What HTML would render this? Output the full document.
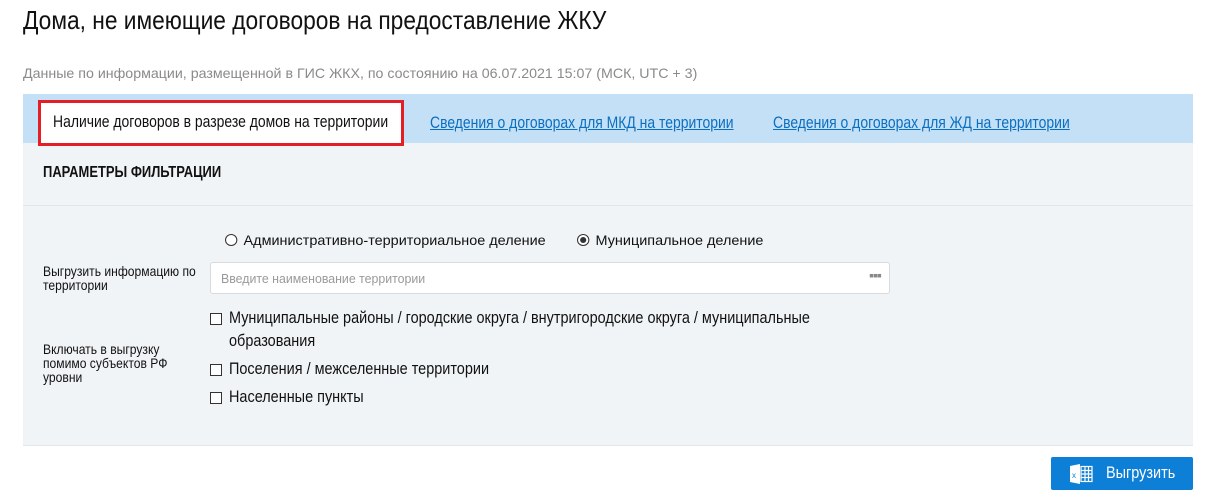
<!DOCTYPE html>
<html><head><meta charset="utf-8"><style>
*{box-sizing:border-box;margin:0;padding:0}
body{width:1209px;height:498px;background:#fff;font-family:"Liberation Sans",sans-serif;color:#111;position:relative;overflow:hidden}
.a{position:absolute;white-space:nowrap;transform-origin:0 50%}
h1{position:absolute;left:23px;top:5px;font-size:26px;font-weight:normal;color:#111;white-space:nowrap;transform:scaleX(0.875);transform-origin:0 50%}
.sub{left:23px;top:65px;font-size:14px;color:#8a8a8a;transform:scaleX(1.015)}
.panel{position:absolute;left:23px;top:94px;width:1170px;height:352px;background:#f1f4f7;border-bottom:1px solid #e2e6ea}
.tabbar{position:absolute;left:0;top:0;width:1170px;height:49px;background:#c4e0f6}
.tab{position:absolute;left:15px;top:6px;width:366px;height:46px;background:#fff;border:3px solid #e31e24}
.lnk{font-size:17px;color:#0b6fc0;text-decoration:underline;top:19px;transform:scaleX(0.82)}
.sep{position:absolute;left:0;top:111px;width:1170px;height:1px;background:#e2e6ea}
.lbl{font-size:14px;line-height:14px;color:#111;transform:scaleX(0.865)}
.rad{display:inline-block;width:12px;height:12px;border:1px solid #333;border-radius:50%;vertical-align:-1px;margin-right:6px;position:relative;background:#fff}
.rad.on::after{content:"";position:absolute;left:2px;top:2px;width:6px;height:6px;border-radius:50%;background:#333}
.cb{position:absolute;left:0;top:4px;width:12px;height:12px;border:1px solid #333;background:#fff}
.chk{font-size:17px;color:#111}
.ct{position:absolute;left:19px;top:-1px;white-space:nowrap;transform:scaleX(0.85);transform-origin:0 50%}
.inp{position:absolute;left:187px;top:168px;width:680px;height:32px;background:#fff;border:1px solid #d7dbe0;border-radius:3px;font-size:13px;color:#9a9a9a}
.btn{position:absolute;left:1051px;top:457px;width:142px;height:33px;background:#0d7fd6;border-radius:2px;color:#fff;font-size:17px}
</style></head><body>
<h1>Дома, не имеющие договоров на предоставление ЖКУ</h1>
<div class="a sub">Данные по информации, размещенной в ГИС ЖКХ, по состоянию на 06.07.2021 15:07 (МСК, UTC + 3)</div>
<div class="panel">
 <div class="tabbar">
  <div class="tab"><span class="a" style="left:12px;top:9px;font-size:17px;transform:scaleX(0.82)">Наличие договоров в разрезе домов на территории</span></div>
  <div class="a lnk" style="left:407px">Сведения о договорах для МКД на территории</div>
  <div class="a lnk" style="left:750px">Сведения о договорах для ЖД на территории</div>
 </div>
 <div class="a" style="left:20px;top:70px;font-size:16px;font-weight:bold;transform:scaleX(0.81)">ПАРАМЕТРЫ ФИЛЬТРАЦИИ</div>
 <div class="sep"></div>
 <div class="a chk" style="left:202px;top:138px;font-size:14px;transform:scaleX(1.03)"><span class="rad"></span>Административно-территориальное деление</div>
 <div class="a chk" style="left:554px;top:138px;font-size:14px;transform:scaleX(1.03)"><span class="rad on"></span>Муниципальное деление</div>
 <div class="a lbl" style="left:20px;top:170px">Выгрузить информацию по<br>территории</div>
 <div class="inp"><span class="a" style="left:10px;top:8px;transform:scaleX(0.95)">Введите наименование территории</span><span style="position:absolute;right:8px;top:4px;color:#888;font-size:14px;letter-spacing:-1px;font-weight:bold">▪▪▪</span></div>
 <div class="a chk" style="left:187px;top:215px;width:700px;height:20px"><span class="cb"></span><span class="ct">Муниципальные районы / городские округа / внутригородские округа / муниципальные</span></div>
 <div class="a chk" style="left:187px;top:238px;width:300px;height:20px"><span class="ct">образования</span></div>
 <div class="a chk" style="left:187px;top:266px;width:400px;height:20px"><span class="cb"></span><span class="ct">Поселения / межселенные территории</span></div>
 <div class="a chk" style="left:187px;top:294px;width:300px;height:20px"><span class="cb"></span><span class="ct">Населенные пункты</span></div>
 <div class="a lbl" style="left:20px;top:248px">Включать в выгрузку<br>помимо субъектов РФ<br>уровни</div>
</div>
<div class="btn">
 <svg style="position:absolute;left:19px;top:6px" width="24" height="22" viewBox="0 0 24 22"><path d="M0 3 L10 1 L10 21 L0 19Z" fill="#fff"/><text x="2" y="15" font-size="8" fill="#0d7fd6" font-family="Liberation Sans">x</text><g fill="none" stroke="#fff" stroke-width="1.2"><rect x="11" y="3.5" width="11" height="15"/><path d="M11 7.5H22M11 11H22M11 14.5H22M15 3.5V18.5M18.5 3.5V18.5"/></g></svg>
 <span class="a" style="left:55px;top:6px;transform:scaleX(0.85)">Выгрузить</span>
</div>
</body></html>
